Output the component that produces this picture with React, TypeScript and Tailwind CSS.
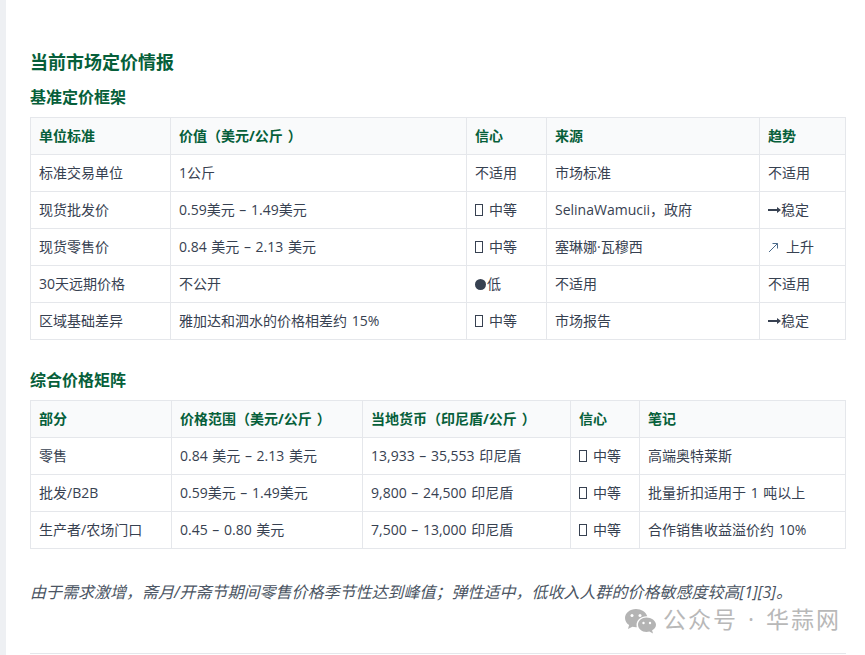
const F = () => <span className="inline-block w-[8px] h-[12px] border border-[#374151] align-[-1px] mr-[6px]" />;

const Conf = () => (
  <>
    <F />中等
  </>
);

const Arrow = () => (
  <svg width="13" height="8" viewBox="0 0 13 8" className="inline-block align-[1px]">
    <path d="M0 3h9V1l4 3-4 3V5H0z" fill="#374151" />
  </svg>
);

const Up = () => (
  <svg width="11" height="11" viewBox="0 0 11 11" className="inline-block align-[-1px] mr-[7px]">
    <path d="M1 10 9.500 1.500M4.500 1.500h5v5" fill="none" stroke="#4b6a8a" strokeWidth="1" />
  </svg>
);

const Close = () => <span className="ml-[5px]">）</span>;

const th = "border border-[#e5e7eb] bg-[#f9fafb] px-2 h-[37px] text-left font-bold text-[#065f3a]";
const td = "border border-[#e5e7eb] px-2 h-[37px] text-left font-normal text-[#374151]";

function Table({ widths, head, rows }: { widths: number[]; head: React.ReactNode[]; rows: React.ReactNode[][] }) {
  return (
    <table className="table-fixed border-collapse w-[815px] text-[14px] leading-[20px] [word-spacing:1px] [text-spacing-trim:space-all]">
      <colgroup>
        {widths.map((w, i) => (
          <col key={i} style={{ width: w }} />
        ))}
      </colgroup>
      <thead>
        <tr>
          {head.map((h, i) => (
            <th key={i} className={th}>{h}</th>
          ))}
        </tr>
      </thead>
      <tbody>
        {rows.map((r, i) => (
          <tr key={i}>
            {r.map((c, j) => (
              <td key={j} className={td}>{c}</td>
            ))}
          </tr>
        ))}
      </tbody>
    </table>
  );
}

export default function App() {
  return (
    <div className="relative flex h-[655px] w-[865px] overflow-hidden bg-white font-['Open_Sans','Noto_Sans_CJK_SC',sans-serif]">
      <div className="w-[6px] shrink-0 bg-[#eef0f3]" />
      <main className="ml-[24px] w-[816px] shrink-0 pt-[50px]">
        <h2 className="text-[18px] leading-[24px] font-bold text-[#065f3a]">当前市场定价情报</h2>
        <h3 className="mt-[12px] text-[16px] leading-[22px] font-bold text-[#065f3a]">基准定价框架</h3>
        <div className="mt-[9px]">
          <Table
            widths={[140, 296, 80, 213, 86]}
            head={["单位标准", <>价值（美元/公斤<Close /></>, "信心", "来源", "趋势"]}
            rows={[
              ["标准交易单位", "1公斤", "不适用", "市场标准", "不适用"],
              ["现货批发价", "0.59美元 – 1.49美元", <Conf />, "SelinaWamucii，政府", <><Arrow />稳定</>],
              ["现货零售价", "0.84 美元 – 2.13 美元", <Conf />, "塞琳娜·瓦穆西", <><Up />上升</>],
              ["30天远期价格", "不公开", <><span className="inline-block w-[11px] h-[11px] rounded-full bg-[#374151] align-[-1px] mr-[1px]" />低</>, "不适用", "不适用"],
              ["区域基础差异", "雅加达和泗水的价格相差约 15%", <Conf />, "市场报告", <><Arrow />稳定</>],
            ]}
          />
        </div>
        <h3 className="mt-[29px] text-[16px] leading-[22px] font-bold text-[#065f3a]">综合价格矩阵</h3>
        <div className="mt-[9px]">
          <Table
            widths={[141, 191, 208, 69, 206]}
            head={["部分", <>价格范围（美元/公斤<Close /></>, <>当地货币（印尼盾/公斤<Close /></>, "信心", "笔记"]}
            rows={[
              ["零售", "0.84 美元 – 2.13 美元", "13,933 – 35,553 印尼盾", <Conf />, "高端奥特莱斯"],
              ["批发/B2B", "0.59美元 – 1.49美元", "9,800 – 24,500 印尼盾", <Conf />, "批量折扣适用于 1 吨以上"],
              ["生产者/农场门口", "0.45 – 0.80 美元", "7,500 – 13,000 印尼盾", <Conf />, "合作销售收益溢价约 10%"],
            ]}
          />
        </div>
        <p className="mt-[31px] text-[16px] leading-[24px] italic text-[#4b5563]">
          由于需求激增，斋月/开斋节期间零售价格季节性达到峰值；弹性适中，低收入人群的价格敏感度较高[1][3]。
        </p>
        <hr className="mt-[49px] border-t border-[#e5e7eb]" />
      </main>
      <div className="absolute left-[624px] top-[607px] flex items-start text-[23px] tracking-[2px] [word-spacing:2px] text-[#b8b8b8]">
        <svg width="32" height="26" viewBox="0 0 32 26" className="mr-[7px] mt-[1px]">
          <path d="M12 1C5.900 1 1 5 1 10c0 2.900 1.600 5.400 4.100 7.100L4 21l4.400-2.300c1.100.3 2.300.5 3.600.5h.8a8.800 8.800 0 0 1-.3-2.200c0-4.900 4.500-8.800 10-8.800h.8C21.900 4 17.400 1 12 1z" fill="#b4b4b4" />
          <path d="M22.500 9.500c-4.700 0-8.500 3.200-8.500 7.200s3.800 7.200 8.500 7.200c1 0 2-.1 2.900-.4L29 25.500l-.9-3.200c2.300-1.300 3.900-3.300 3.900-5.600 0-4-4.800-7.200-9.500-7.200z" fill="#b4b4b4" />
          <circle cx="8" cy="7.500" r="1.500" fill="#fff" />
          <circle cx="16" cy="7.500" r="1.500" fill="#fff" />
          <circle cx="19.500" cy="15" r="1.200" fill="#fff" />
          <circle cx="26" cy="15" r="1.200" fill="#fff" />
        </svg>
        <span className="leading-[24px]">公众号 · 华蒜网</span>
      </div>
    </div>
  );
}
